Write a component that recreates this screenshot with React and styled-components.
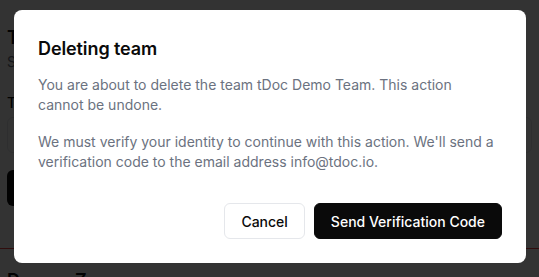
import React from "react";
import styled, { createGlobalStyle } from "styled-components";

const Global = createGlobalStyle`
  html, body { margin: 0; padding: 0; background: #ffffff; }
  body { font-family: Inter, "Noto Sans", sans-serif; -webkit-font-smoothing: antialiased; }
  * { box-sizing: border-box; }
`;

const Page = styled.div`
  width: 539px;
  height: 277px;
  overflow: hidden;
  position: relative;
  padding: 24px 7px 0;
  display: flex;
  flex-direction: column;
  & > * { flex-shrink: 0; }
`;

const PageTitle = styled.div`
  font-size: 18px;
  font-weight: 600;
  color: #0a0a0a;
  line-height: 28px;
`;

const PageSub = styled.div`
  font-size: 14px;
  color: #6b7280;
  line-height: 20px;
`;

const Label = styled.div`
  margin-top: 21px;
  font-size: 14px;
  font-weight: 500;
  color: #0a0a0a;
  line-height: 20px;
`;

const Input = styled.div`
  margin-top: 4px;
  height: 36px;
  border: 1px solid #e5e7eb;
  border-radius: 6px;
`;

const DarkButton = styled.div`
  margin-top: 17px;
  width: 90px;
  height: 36px;
  border-radius: 6px;
  background: #0a0a0a;
`;

const DangerLine = styled.div`
  margin: 42px -7px 0;
  height: 1px;
  background: #ef4444;
`;

const DangerTitle = styled.div`
  margin-top: 18px;
  font-size: 18px;
  font-weight: 600;
  line-height: 28px;
  color: #0a0a0a;
`;

const Overlay = styled.div`
  position: fixed;
  inset: 0;
  background: rgba(0, 0, 0, 0.8);
  display: flex;
  align-items: flex-start;
  justify-content: center;
  padding-top: 10px;
`;

const Dialog = styled.div`
  width: 512px;
  margin-left: 1px;
  background: #ffffff;
  border-radius: 8px;
  padding: 25px 24px 24px;
  display: flex;
  flex-direction: column;
`;

const Title = styled.h2`
  margin: 0;
  font-size: 18px;
  font-weight: 600;
  line-height: 28px;
  color: #0a0a0a;
  letter-spacing: -0.1px;
`;

const Body = styled.div`
  margin-top: 12px;
  display: flex;
  flex-direction: column;
  gap: 17px;
`;

const Para = styled.p`
  margin: 0;
  max-width: 460px;
  font-size: 14px;
  line-height: 20px;
  color: #6b7280;
`;

const Footer = styled.div`
  margin-top: 31px;
  display: flex;
  justify-content: flex-end;
  gap: 9px;
`;

const Button = styled.button`
  height: 36px;
  padding: 0 16px;
  border-radius: 6px;
  font-family: Inter, "Noto Sans", sans-serif;
  font-size: 14px;
  font-weight: 500;
  cursor: pointer;
  border: 1px solid ${(p) => (p.$primary ? "#0a0a0a" : "#e5e7eb")};
  background: ${(p) => (p.$primary ? "#0a0a0a" : "#ffffff")};
  color: ${(p) => (p.$primary ? "#ffffff" : "#0a0a0a")};
`;

export default function App() {
  return (
    <>
      <Global />
      <Page>
        <PageTitle>Team Settings</PageTitle>
        <PageSub>Settings for your team</PageSub>
        <Label>Team Name</Label>
        <Input />
        <DarkButton />
        <DangerLine />
        <DangerTitle>Danger Zone</DangerTitle>
      </Page>
      <Overlay>
        <Dialog>
          <Title>Deleting team</Title>
          <Body>
            <Para>
              You are about to delete the team tDoc Demo Team. This action cannot be undone.
            </Para>
            <Para>
              We must verify your identity to continue with this action. We'll send a
              verification code to the email address info@tdoc.io.
            </Para>
          </Body>
          <Footer>
            <Button>Cancel</Button>
            <Button $primary>Send Verification Code</Button>
          </Footer>
        </Dialog>
      </Overlay>
    </>
  );
}
